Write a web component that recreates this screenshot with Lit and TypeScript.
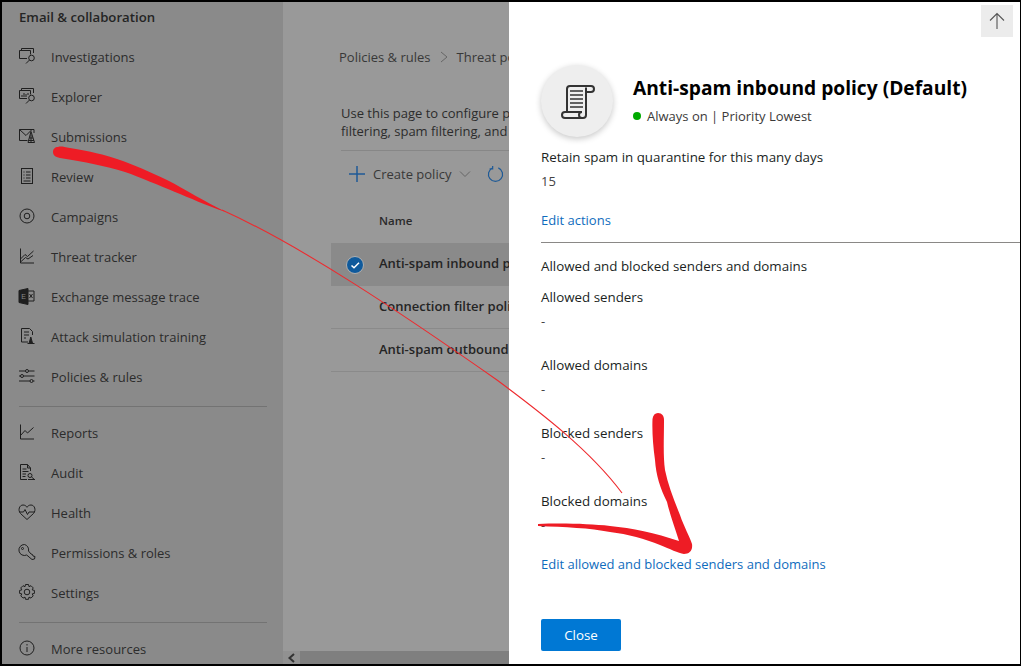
import { html, css, svg, LitElement } from 'lit';
import { customElement } from 'lit/decorators.js';

const navIcons: Record<string, unknown> = {
    investigations: svg`<path d="M3.500 2.500V.5h12v4.500M1.500 2.500h11v4M9 10.500H1.500v-8"/><circle cx="13.500" cy="10" r="2.800"/><path d="M11.500 12 8 15.500"/>`,
    explorer: svg`<path d="M3.500 2.500V.5h12v4.500M1.500 2.500h11v4M9 10.500H1.500v-8"/><path d="M4 9V7M6 9V5M8 9V6M10 7V5"/><circle cx="13.500" cy="10" r="2.800"/><path d="M11.500 12 8 15.500"/>`,
    submissions: svg`<path d="M9.500 12.500h-8v-11h14.500v3.500M1.500 1.500l6.500 6 6-6"/><path d="M13 3.500 10 14.500h6.500zM13 6.500v8M11.500 10h3.500M10.500 12.500h5.500"/>`,
    review: svg`<rect x="3.500" y="0.500" width="11" height="15"/><path d="M5.500 4h1M8 4h4.500M5.500 7h1M8 7h4.500M5.500 10h1M8 10h4.500M5.500 13h7"/>`,
    campaigns: svg`<circle cx="9" cy="8" r="7"/><circle cx="9" cy="8" r="2.800"/>`,
    threat: svg`<path d="M2.500 .5V15h13.500"/><path d="M2.500 11 7 6.500l2.500 2L15.500 3M2.500 14l5-4.500 2.500 1.500 5-3.500"/>`,
    exchange: svg`<path d="M1 2.500 10 .5v16l-9-2z" fill="#1f1f1f"/><path d="M10 3h6v10h-6M11.500 6l3 4M14.500 6l-3 4"/><text x="3.200" y="10.500" font-size="7" font-family="Liberation Sans" fill="#8a8a8a" stroke="none">E</text>`,
    attack: svg`<path d="M10 14H3.500V.5h8l3 3V7M6 4h5M6 7h5M6 10h2"/><path d="M11 15.500 12.800 9l1.800 6.500zM9.500 15.500h7" fill="#1f1f1f"/>`,
    policies: svg`<path d="M1 3h6.500M10.500 3h6M1 8h1.500M5.500 8h11M1 13h11M15 13h1.500"/><circle cx="9" cy="3" r="1.500"/><circle cx="4" cy="8" r="1.500"/><circle cx="13.500" cy="13" r="1.500"/>`,
    reports: svg`<path d="M2.500 .5V15h13.500"/><path d="M2.500 11.500 7 6.500l2.500 2.500 6-5.500"/>`,
    audit: svg`<path d="M12.500 7V4l-3-3.500h-7v15H9M9.500 .5V4h3M4.500 5h4M4.500 7.500h6M4.500 10h3.500M4.500 12.500h3"/><circle cx="12" cy="11.500" r="2"/><path d="m13.500 13 3 2.500M10 15.500h7"/>`,
    health: svg`<path d="M9 15.500 2.500 9.500C-.5 6 1.500 1 5 1c2 0 3.200 1 4 2.300C9.800 2 11 1 13 1c3.500 0 5.500 5 2.500 8.500z"/><path d="M1.500 8h4l1.500-2.500 2.500 5 1.500-2.500h5.500"/>`,
    permissions: svg`<path d="M6.500 .5a5.500 5.500 0 1 0 2.200 10.500l5.300 4.500 2.500-.5.500-2.500-2-.5-.5-1.500-1.500-.5-2.500-3A5.500 5.500 0 0 0 6.500 .5z"/><circle cx="4.500" cy="4.500" r="1"/>`,
    settings: svg`<circle cx="9" cy="8" r="2.800"/><path d="M7.500 .5h3l.5 2.200 2-1 2.200 2.200-1 2 2.200.5v3l-2.200.5 1 2-2.200 2.200-2-1-.5 2.200h-3l-.5-2.200-2 1-2.200-2.200 1-2-2.200-.5v-3l2.200-.5-1-2 2.200-2.200 2 1z"/>`,
    info: svg`<circle cx="9" cy="8" r="7"/><path d="M9 7v5M9 4v1.500"/>`,
};

type NavItem = { label: string; icon: string };

const groupOne: NavItem[] = [
    { label: 'Investigations', icon: 'investigations' },
    { label: 'Explorer', icon: 'explorer' },
    { label: 'Submissions', icon: 'submissions' },
    { label: 'Review', icon: 'review' },
    { label: 'Campaigns', icon: 'campaigns' },
    { label: 'Threat tracker', icon: 'threat' },
    { label: 'Exchange message trace', icon: 'exchange' },
    { label: 'Attack simulation training', icon: 'attack' },
    { label: 'Policies & rules', icon: 'policies' },
];

const groupTwo: NavItem[] = [
    { label: 'Reports', icon: 'reports' },
    { label: 'Audit', icon: 'audit' },
    { label: 'Health', icon: 'health' },
    { label: 'Permissions & roles', icon: 'permissions' },
    { label: 'Settings', icon: 'settings' },
];

const senderFields = ['Allowed senders', 'Allowed domains', 'Blocked senders', 'Blocked domains'];

@customElement('app-root')
export class AppRoot extends LitElement {
    static styles = css`
        :host {
            display: block;
            width: 1021px;
            height: 666px;
            font-family: 'Open Sans', 'Liberation Sans', sans-serif;
            font-size: 13px;
        }
        .frame {
            position: relative;
            box-sizing: border-box;
            width: 1021px;
            height: 666px;
            display: flex;
            overflow: hidden;
            background: #000;
            padding: 2px 1px 2px 2px;
        }
        .sidebar {
            width: 281px;
            flex: none;
            background: #8a8a8a;
            color: #2c2c2c;
            overflow: hidden;
        }
        .nav-title {
            height: 30px;
            line-height: 30px;
            padding: 0 0 5px 17px;
            font-size: 13.200px;
            font-weight: 600;
            color: #242424;
        }
        .nav-item {
            display: flex;
            align-items: center;
            height: 40px;
            padding-left: 16px;
        }
        .nav-item svg {
            width: 18px;
            height: 18px;
            margin-right: 15px;
            margin-top: -1px;
            fill: none;
            stroke: #1f1f1f;
            stroke-width: 1;
        }
        .nav-rule {
            height: 1px;
            margin: 9px 16px 6px 17px;
            background: #737373;
        }
        .main {
            position: relative;
            width: 226px;
            flex: none;
            box-sizing: border-box;
            background: #999;
            color: #2c2c2c;
            overflow: hidden;
            padding: 45px 0 0 48px;
        }
        .crumbs {
            display: flex;
            align-items: center;
            gap: 9px;
            white-space: nowrap;
            height: 20px;
            margin-left: 8px;
            color: #383838;
        }
        .crumbs svg {
            width: 8px;
            height: 12px;
            fill: none;
            stroke: #666;
            flex: none;
        }
        .intro {
            margin: 37px 0 0 10px;
            line-height: 18px;
            white-space: nowrap;
            border-bottom: 1px solid #878787;
            padding-bottom: 10px;
        }
        .toolbar {
            display: flex;
            align-items: center;
            height: 46px;
            margin-left: 18px;
            white-space: nowrap;
            color: #383838;
        }
        .toolbar .plus {
            width: 16px;
            height: 16px;
            fill: none;
            stroke: #1f5a96;
            stroke-width: 1.500;
            margin-right: 8px;
            flex: none;
        }
        .toolbar .chev {
            width: 12px;
            height: 12px;
            fill: none;
            stroke: #666;
            flex: none;
            margin: 0 16px 0 8px;
        }
        .toolbar .refresh {
            width: 17px;
            height: 18px;
            fill: none;
            stroke: #1f5a96;
            stroke-width: 1.300;
            flex: none;
        }
        .table-head {
            height: 46px;
            line-height: 48px;
            padding-left: 48px;
            font-weight: 600;
            font-size: 11.500px;
            color: #2a2a2a;
        }
        .row {
            display: flex;
            align-items: center;
            box-sizing: border-box;
            height: 43px;
            padding: 0 0 2px 48px;
            border-bottom: 1px solid #8a8a8a;
            font-weight: 600;
            white-space: nowrap;
            color: #242424;
            position: relative;
        }
        .row.selected {
            background: #8a8a8a;
        }
        .check {
            position: absolute;
            left: 15px;
            top: 13px;
            width: 18px;
            height: 18px;
        }
        .scroller {
            position: absolute;
            left: 0;
            right: 0;
            bottom: 0;
            height: 13px;
            background: #7f7f7f;
        }
        .scroll-left {
            width: 17px;
            height: 13px;
            background: #919191;
            display: flex;
            align-items: center;
            justify-content: center;
        }
        .scroll-left svg {
            width: 9px;
            height: 10px;
            fill: none;
            stroke: #333;
            stroke-width: 2;
        }
        .panel {
            flex: 1;
            background: #fff;
            color: #323130;
            display: flex;
            flex-direction: column;
            overflow: hidden;
        }
        .panel-top {
            height: 150px;
            flex: none;
            position: relative;
            box-sizing: border-box;
            padding: 27px 0 0 32px;
            display: flex;
            background: #fff;
        }
        .up {
            position: absolute;
            right: 7px;
            top: 3px;
            width: 32px;
            height: 32px;
            background: #ececec;
            display: flex;
            align-items: center;
            justify-content: center;
        }
        .up svg {
            width: 18px;
            height: 18px;
            fill: none;
            stroke: #555;
            stroke-width: 1.100;
        }
        .avatar {
            width: 72px;
            height: 72px;
            margin-top: 36px;
            border-radius: 50%;
            background: #eee;
            box-shadow: 0 2px 6px rgba(0, 0, 0, 0.22);
            display: flex;
            align-items: center;
            justify-content: center;
            flex: none;
        }
        .avatar svg {
            width: 36px;
            height: 36px;
            fill: none;
            stroke: #333;
            stroke-width: 2;
        }
        .heading {
            margin: 44px 0 0 20px;
        }
        .title {
            font-size: 19.200px;
            font-weight: 700;
            line-height: 30px;
            color: #000;
            white-space: nowrap;
        }
        .status {
            display: flex;
            align-items: center;
            height: 20px;
            margin-top: 3px;
            color: #3b3a39;
        }
        .dot {
            width: 8px;
            height: 8px;
            border-radius: 50%;
            background: #0a0;
            margin-right: 6px;
        }
        .panel-body {
            flex: 1;
            overflow: hidden;
            min-height: 0;
        }
        .body-inner {
            margin-top: -5px;
            padding-left: 32px;
        }
        .label {
            font-size: 13.350px;
            font-weight: 500;
            line-height: 20px;
            color: #201f1e;
        }
        .value {
            line-height: 20px;
            margin-top: 4px;
            height: 20px;
            color: #444;
        }
        a {
            color: #0f6cbd;
            display: block;
            line-height: 20px;
            text-decoration: none;
        }
        .edit-actions {
            margin-top: 19px;
        }
        .rule {
            height: 1px;
            background: #8a8886;
            margin: 12px 0 13px;
        }
        .field {
            margin-top: 11px;
            height: 57px;
        }
        .section {
            height: 20px;
        }
        .edit-senders {
            margin-top: 6px;
        }
        .footer {
            margin-top: 45px;
        }
        button {
            width: 80px;
            height: 32px;
            border: none;
            border-radius: 2px;
            background: #0078d4;
            color: #fff;
            font: inherit;
            font-size: 13.350px;
            font-weight: 500;
        }
        .ink {
            position: absolute;
            left: 0;
            top: 0;
            width: 1021px;
            height: 666px;
            pointer-events: none;
        }
    `;

    renderNavItem(item: NavItem) {
        return html`<div class="nav-item">
            <svg viewBox="0 0 18 18">${navIcons[item.icon]}</svg>
            <span>${item.label}</span>
        </div>`;
    }

    render() {
        return html`
            <div class="frame">
                <nav class="sidebar">
                    <div class="nav-title">Email &amp; collaboration</div>
                    ${groupOne.map((item) => this.renderNavItem(item))}
                    <div class="nav-rule"></div>
                    ${groupTwo.map((item) => this.renderNavItem(item))}
                    <div class="nav-rule"></div>
                    ${this.renderNavItem({ label: 'More resources', icon: 'info' })}
                </nav>
                <section class="main">
                    <div class="crumbs">
                        <span>Policies &amp; rules</span>
                        <svg viewBox="0 0 8 12"><path d="M1 1l6 5-6 5"/></svg>
                        <span>Threat policies</span>
                    </div>
                    <div class="intro">
                        Use this page to configure policies<br />
                        filtering, spam filtering, and outbound
                    </div>
                    <div class="toolbar">
                        <svg class="plus" viewBox="0 0 16 16"><path d="M8 0v16M0 8h16"/></svg>
                        <span>Create policy</span>
                        <svg class="chev" viewBox="0 0 12 12"><path d="M1 3.500l5 5 5-5"/></svg>
                        <svg class="refresh" viewBox="0 0 18 18"><path d="M6 2.500a7.500 7.500 0 1 0 6 0M6 .5v3H2.800"/></svg>
                    </div>
                    <div class="table-head">Name</div>
                    <div class="row selected">
                        <svg class="check" viewBox="0 0 18 18">
                            <circle cx="9" cy="9" r="8.500" fill="#0f5a9c" stroke="#b0b0b0" stroke-width="1" />
                            <path d="M5.500 9.500l2.500 2.300 5-5" fill="none" stroke="#fff" stroke-width="1.500" />
                        </svg>
                        Anti-spam inbound policy
                    </div>
                    <div class="row">Connection filter policy</div>
                    <div class="row">Anti-spam outbound policy</div>
                    <div class="scroller">
                        <div class="scroll-left">
                            <svg viewBox="0 0 9 10"><path d="M7 1 2.500 5 7 9"/></svg>
                        </div>
                    </div>
                </section>
                <aside class="panel">
                    <header class="panel-top">
                        <div class="up">
                            <svg viewBox="0 0 18 18"><path d="M9 17V1.500M2 8.500l7-7 7 7"/></svg>
                        </div>
                        <div class="avatar">
                            <svg viewBox="0 0 36 36">
                                <path d="M8 29V6a3 3 0 0 1 3-3h21a3 3 0 0 1 0 6h-4M27 4.500V32a3 3 0 0 1-3 3H6a3 3 0 0 1 0-6h17a3 3 0 0 0 0 6" />
                                <path stroke-width="1.500" d="M11 8h13M11 12h13M11 16h13M11 20h13M11 24h13" />
                            </svg>
                        </div>
                        <div class="heading">
                            <div class="title">Anti-spam inbound policy (Default)</div>
                            <div class="status"><span class="dot"></span>Always on | Priority Lowest</div>
                        </div>
                    </header>
                    <div class="panel-body">
                        <div class="body-inner">
                            <div class="label">Retain spam in quarantine for this many days</div>
                            <div class="value">15</div>
                            <a class="edit-actions" href="#">Edit actions</a>
                            <div class="rule"></div>
                            <div class="label section">Allowed and blocked senders and domains</div>
                            ${senderFields.map(
                                (name) => html`<div class="field">
                                    <div class="label">${name}</div>
                                    <div class="value">-</div>
                                </div>`
                            )}
                            <a class="edit-senders" href="#">Edit allowed and blocked senders and domains</a>
                            <div class="footer"><button>Close</button></div>
                        </div>
                    </div>
                </aside>
                <svg class="ink" viewBox="0 0 1021 666">
                    <path fill="#ee1c25" d="M58 147C61 146 64 147 70 148C90 151 105 155 117 159C135 165 150 172 167 180C185 189 205 202 226 212C205 205 190 198 175 192C160 186 140 177 125 172C105 166 85 162 60 158C55 157 53 155 53 152C53 149 55 147 58 147Z" />
                    <path fill="none" stroke="#ee2a2e" stroke-width="1.100" d="M222 210C300 245 400 312 497 380C540 412 590 450 622 493" />
                    <path fill="#ee1c25" d="M658 413C662 413 664 416 664 420C664 440 663 455 665 470C668 485 674 500 680 515C684 527 690 537 692 544C693 551 689 554 684 554C678 553 670 549 660 545C645 539 628 534 610 532C590 528 565 527 538 526L538 524C565 523 590 524 610 526C632 528 655 533 679 541C675 528 670 515 667 502C660 488 656 475 655 460C653 445 652 432 652.500 419C653 415 655 413 658 413Z" />
                </svg>
            </div>
        `;
    }
}
